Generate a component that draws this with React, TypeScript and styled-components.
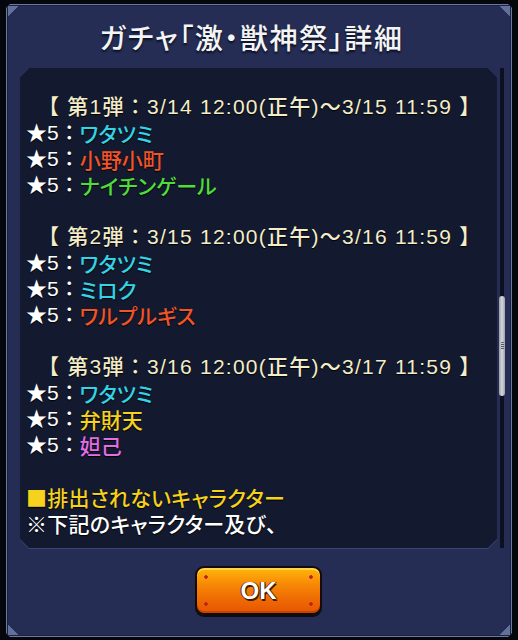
import styled, { createGlobalStyle } from "styled-components";

const GlobalStyle = createGlobalStyle`
    html, body {
        margin: 0;
        padding: 0;
        background: #05070c;
    }
    body {
        font-family: "Noto Sans CJK JP", "Noto Sans", sans-serif;
    }
`;

type Entry = { name: string; color: string };
type Wave = { header: string; entries: Entry[] };

const CYAN = "#35d3e6";
const RED = "#f2542a";
const GREEN = "#4fdc3c";
const YELLOW = "#f6d21e";
const PINK = "#e46ee6";

const WAVES: Wave[] = [
    {
        header: "【 第1弾：3/14 12:00(正午)～3/15 11:59 】",
        entries: [
            { name: "ワタツミ", color: CYAN },
            { name: "小野小町", color: RED },
            { name: "ナイチンゲール", color: GREEN },
        ],
    },
    {
        header: "【 第2弾：3/15 12:00(正午)～3/16 11:59 】",
        entries: [
            { name: "ワタツミ", color: CYAN },
            { name: "ミロク", color: CYAN },
            { name: "ワルプルギス", color: RED },
        ],
    },
    {
        header: "【 第3弾：3/16 12:00(正午)～3/17 11:59 】",
        entries: [
            { name: "ワタツミ", color: CYAN },
            { name: "弁財天", color: YELLOW },
            { name: "妲己", color: PINK },
        ],
    },
];

const Panel = styled.div`
    box-sizing: border-box;
    width: 506px;
    height: 633px;
    margin: 4px 0 0 6px;
    display: flex;
    flex-direction: column;
    padding: 0 6px 0 13px;
    border: 1px solid #6a78a2;
    box-shadow: inset 0 0 0 1px #1b2140;
    background:
        linear-gradient(135deg, #62719a 0 9px, transparent 9px) top left / 14px 14px no-repeat,
        linear-gradient(225deg, #62719a 0 9px, transparent 9px) top right / 14px 14px no-repeat,
        linear-gradient(45deg, #62719a 0 9px, transparent 9px) bottom left / 14px 14px no-repeat,
        linear-gradient(315deg, #62719a 0 9px, transparent 9px) bottom right / 14px 14px no-repeat,
        #252d54;
    clip-path: polygon(4px 0, calc(100% - 4px) 0, 100% 4px, 100% calc(100% - 4px), calc(100% - 4px) 100%, 4px 100%, 0 calc(100% - 4px), 0 4px);
`;

const Title = styled.h1`
    margin: 0;
    height: 63px;
    display: flex;
    align-items: center;
    justify-content: center;
    padding: 0 22px 0 0;
    font-size: 28px;
    font-weight: 500;
    font-feature-settings: "palt";
    color: #f4f4f4;
    letter-spacing: 1.6px;
    text-shadow: 0 2px 2px #0b0f22;
`;

const Body = styled.div`
    display: flex;
    gap: 2px;
    height: 480px;
`;

const ContentFrame = styled.div`
    width: 477px;
    height: 100%;
    padding-bottom: 1px;
    background: #3a4670;
    clip-path: polygon(9px 0, calc(100% - 9px) 0, 100% 9px, 100% calc(100% - 9px), calc(100% - 9px) 100%, 9px 100%, 0 calc(100% - 9px), 0 9px);
`;

const ContentBox = styled.div`
    box-sizing: border-box;
    height: 100%;
    padding: 26px 0 0 6px;
    background: #131a2f;
    overflow: hidden;
    clip-path: polygon(9px 0, calc(100% - 9px) 0, 100% 9px, 100% calc(100% - 9px), calc(100% - 9px) 100%, 9px 100%, 0 calc(100% - 9px), 0 9px);
`;

const Line = styled.div<{ $color?: string }>`
    display: flex;
    align-items: center;
    height: 26px;
    line-height: 26px;
    font-family: "Liberation Sans", "Noto Sans CJK JP", sans-serif;
    font-size: 21px;
    font-weight: 500;
    white-space: nowrap;
    color: ${(p) => p.$color ?? "#ffffff"};
    text-shadow: 0 1px 1px #000;
`;

const WaveHeader = styled(Line)`
    padding-left: 12px;
    letter-spacing: 1.25px;
    color: #f4edca;
`;

const Note = styled(Line)`
    font-family: "Noto Sans CJK JP", sans-serif;
    font-feature-settings: "palt";
    letter-spacing: 0.3px;
`;

const Rarity = styled.span`
    line-height: 26px;
`;

const Name = styled.span<{ $color: string }>`
    line-height: 26px;
    font-family: "Noto Sans CJK JP", sans-serif;
    font-feature-settings: "palt";
    color: ${(p) => p.$color};
`;

const Gap = styled.div`
    height: 26px;
`;

const ScrollTrack = styled.div`
    width: 6px;
    height: 100%;
    display: flex;
    justify-content: center;
    background: linear-gradient(90deg, transparent 1px, #0c1020 1px, #0c1020 5px, transparent 5px);
`;

const ScrollThumb = styled.div`
    width: 7px;
    height: 100px;
    margin-top: 228px;
    border-radius: 4px;
    background: linear-gradient(90deg, #9a9ea8, #d6d8dc 50%, #9a9ea8);
    display: flex;
    align-items: center;
    justify-content: center;
    &::after {
        content: "";
        width: 3px;
        height: 8px;
        border-radius: 1px;
        background: repeating-linear-gradient(#55596a 0 1px, transparent 1px 2px);
    }
`;

const Footer = styled.div`
    display: flex;
    justify-content: center;
    padding: 18px 8px 0 0;
`;

const OkButton = styled.button`
    box-sizing: border-box;
    width: 127px;
    height: 49px;
    border: 2px solid #140b04;
    border-radius: 9px;
    padding: 0;
    background:
        radial-gradient(circle, #c2200c 1.5px, transparent 2px) 6px 6px / 6px 6px no-repeat,
        radial-gradient(circle, #c2200c 1.5px, transparent 2px) calc(100% - 6px) 6px / 6px 6px no-repeat,
        radial-gradient(circle, #c2200c 1.5px, transparent 2px) 6px calc(100% - 6px) / 6px 6px no-repeat,
        radial-gradient(circle, #c2200c 1.5px, transparent 2px) calc(100% - 6px) calc(100% - 6px) / 6px 6px no-repeat,
        linear-gradient(#ffb60a 0%, #f88a06 35%, #ee6a04 70%, #e65503 100%);
    box-shadow: inset 0 2px 0 #ffd64a, inset 0 -2px 0 #c64402, 0 2px 0 #0a0c18;
    font-family: "Liberation Sans", "Noto Sans", sans-serif;
    font-size: 24px;
    font-weight: 700;
    color: #ffffff;
    text-shadow: 1px 2px 0 #4a1a00, -1px 0 0 #4a1a00, 1px 0 0 #4a1a00;
    cursor: pointer;
`;

export default function App() {
    return (
        <>
            <GlobalStyle />
            <Panel>
                <Title>ガチャ「激・獣神祭」詳細</Title>
                <Body>
                    <ContentFrame>
                        <ContentBox>
                            {WAVES.map((wave) => (
                                <div key={wave.header}>
                                    <WaveHeader>{wave.header}</WaveHeader>
                                    {wave.entries.map((entry, i) => (
                                        <Line key={i}>
                                            <Rarity>★5：</Rarity>
                                            <Name $color={entry.color}>{entry.name}</Name>
                                        </Line>
                                    ))}
                                    <Gap />
                                </div>
                            ))}
                            <Note $color={YELLOW}>■排出されないキャラクター</Note>
                            <Note>※下記のキャラクター及び、</Note>
                        </ContentBox>
                    </ContentFrame>
                    <ScrollTrack>
                        <ScrollThumb />
                    </ScrollTrack>
                </Body>
                <Footer>
                    <OkButton>OK</OkButton>
                </Footer>
            </Panel>
        </>
    );
}
